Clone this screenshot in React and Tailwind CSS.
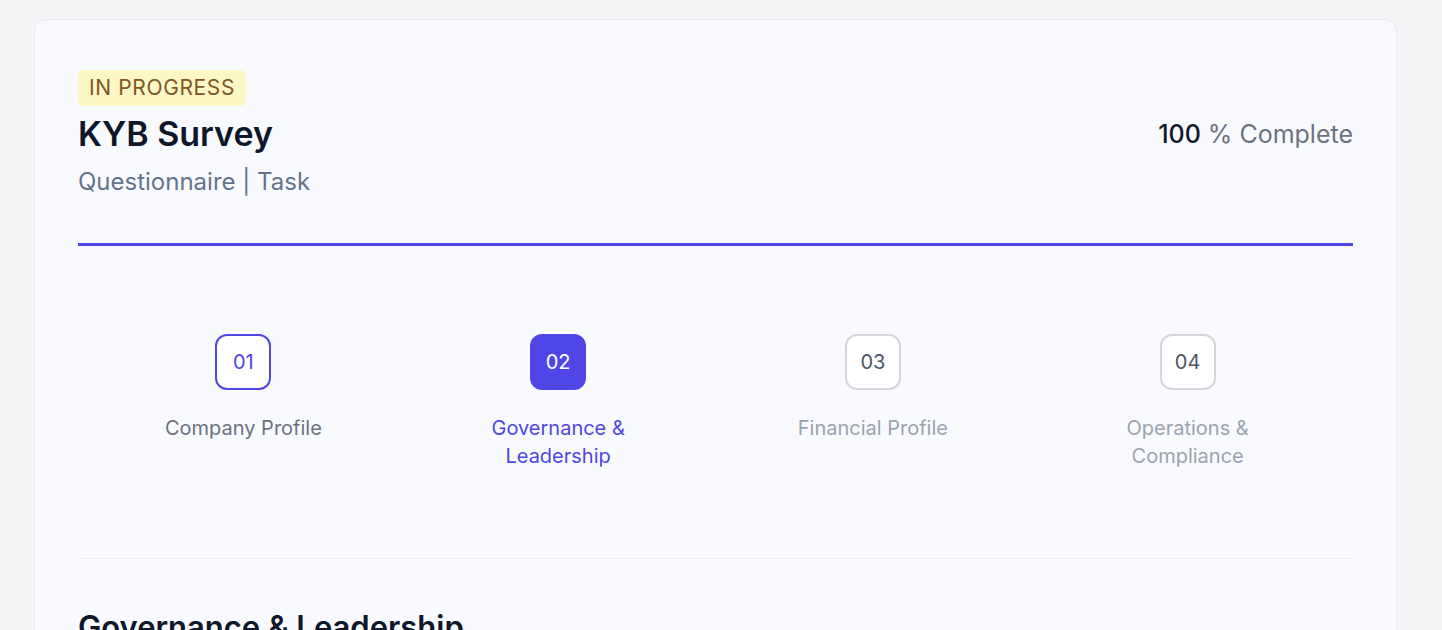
import React from 'react';

const steps = [
  { num: '01', label: 'Company Profile', state: 'done' },
  { num: '02', label: 'Governance & Leadership', state: 'active' },
  { num: '03', label: 'Financial Profile', state: 'todo' },
  { num: '04', label: 'Operations & Compliance', state: 'todo' },
];

function StepBox({ num, state }) {
  if (state === 'active') {
    return (
      <div className="w-14 h-14 rounded-xl bg-[#4f46e5] border-2 border-[#4f46e5] flex items-center justify-center text-white text-[20px]">
        {num}
      </div>
    );
  }
  if (state === 'done') {
    return (
      <div className="w-14 h-14 rounded-xl bg-white border-2 border-[#4f46e5] flex items-center justify-center text-[#4f46e5] text-[20px]">
        {num}
      </div>
    );
  }
  return (
    <div className="w-14 h-14 rounded-xl bg-white border-2 border-[#d4d6dc] flex items-center justify-center text-[#4b5563] text-[20px]">
      {num}
    </div>
  );
}

export default function App() {
  const labelColor = {
    done: 'text-[#6b7280]',
    active: 'text-[#4f46e5]',
    todo: 'text-[#9ca3af]',
  };

  return (
    <div className="min-h-screen bg-[#f4f5f7] pt-[19px] pl-[34px] font-['Inter',sans-serif]">
      <div className="w-[1363px] rounded-xl border border-[#e8eaee] bg-[#f9fafe] px-[43px] pt-[50px] pb-10">
        {/* header */}
        <span className="inline-block rounded-md bg-[#fdf6c5] px-[11px] py-1 text-[21px] leading-7 text-[#7f5624] tracking-[0.03em]">
          IN PROGRESS
        </span>
        <div className="mt-2 flex items-start justify-between">
          <div>
            <h1 className="text-[34px] leading-10 font-semibold text-[#0f172a]">KYB Survey</h1>
            <p className="mt-3 text-2xl text-[#64748b]">Questionnaire | Task</p>
          </div>
          <div className="mt-1 text-[25px] leading-8">
            <span className="font-medium text-[#111827]">100</span>
            <span className="text-[#6b7280]"> % Complete</span>
          </div>
        </div>

        <div className="mt-[45px] h-[3px] w-full bg-[#4f46e5]" />

        {/* steps */}
        <div className="mt-[88px] grid grid-cols-4 px-2">
          {steps.map((s) => (
            <div key={s.num} className="flex flex-col items-center">
              <StepBox num={s.num} state={s.state} />
              <p className={`mt-6 max-w-[170px] text-center text-[20px] leading-7 ${labelColor[s.state]}`}>
                {s.label}
              </p>
            </div>
          ))}
        </div>

        <div className="mt-[88px] h-px w-full bg-[#eceef2]" />

        <h2 className="mt-[50px] text-[31px] leading-9 font-semibold text-[#0f172a]">Governance &amp; Leadership</h2>
      </div>
    </div>
  );
}
